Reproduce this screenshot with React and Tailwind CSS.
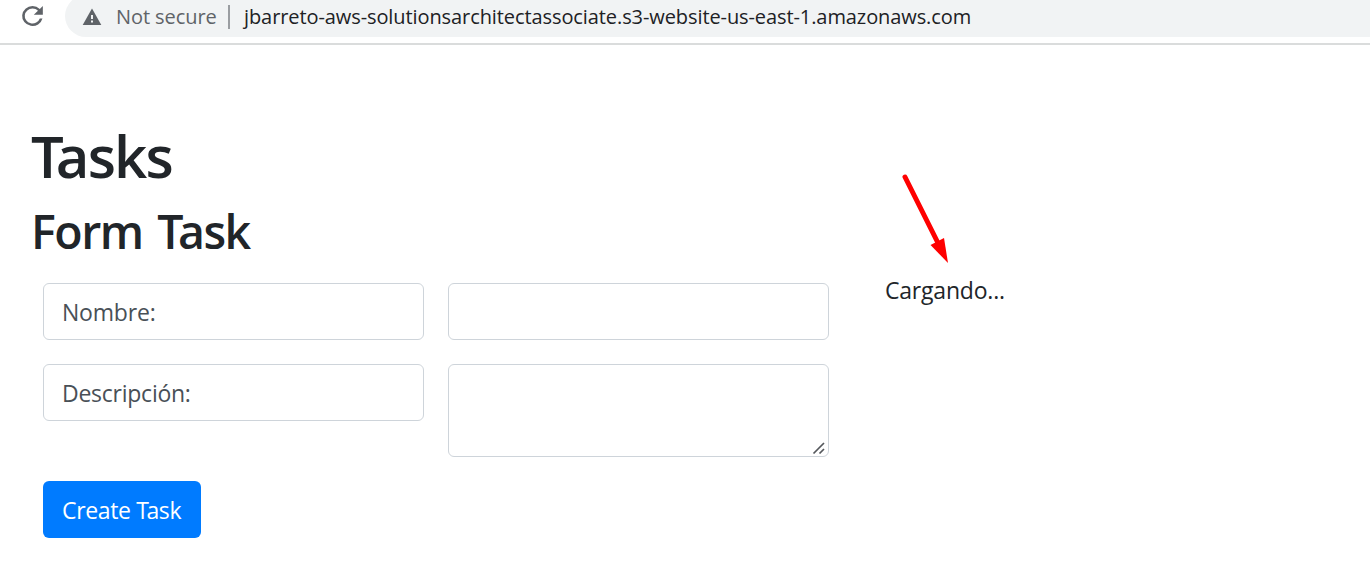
const FONT = "font-['Open_Sans','Noto_Sans',sans-serif]";

function ReloadIcon() {
  return (
    <svg viewBox="0 0 24 24" className="ml-[17px] mt-[1px] h-[30px] w-[31px] shrink-0" preserveAspectRatio="none" aria-hidden="true">
      <path
        fill="#5f6368"
        d="M17.65 6.35A7.96 7.96 0 0 0 12 4a8 8 0 1 0 7.73 10h-2.08A6 6 0 1 1 12 6c1.66 0 3.14.69 4.22 1.78L13 11h7V4z"
      />
    </svg>
  );
}

function WarningIcon() {
  return (
    <svg viewBox="0 0 20 18" className="h-[18px] w-5 shrink-0" aria-hidden="true">
      <path fill="#5f6368" d="M10 0.5 19.3 17H0.7z" />
      <path fill="#f1f3f4" d="M9 7h2v4H9zM9 12.5h2v2H9z" />
    </svg>
  );
}

function AddressBar() {
  return (
    <header className="flex h-[45px] items-start overflow-hidden border-b-2 border-[#dadcdc] bg-white">
      <ReloadIcon />
      <div className="-mt-[5px] ml-[17px] flex h-[42px] flex-1 items-center rounded-l-full bg-[#f1f3f4] pl-[17px] pt-[1px] text-[20px] leading-[30px]">
        <WarningIcon />
        <span className="ml-[14px] w-[101px] whitespace-nowrap tracking-[-0.08px] text-[#5f6368]">Not secure</span>
        <span className="ml-[11px] h-6 w-[2px] bg-[#9a9da1]" />
        <span className="ml-[14px] whitespace-nowrap tracking-[-0.09px] text-[#202124]">
          jbarreto-aws-solutionsarchitectassociate.s3-website-us-east-1.amazonaws.com
        </span>
      </div>
    </header>
  );
}

function Arrow() {
  return (
    <svg viewBox="0 0 50 92" className="absolute left-[14px] -top-[101px] h-[92px] w-[50px]" aria-hidden="true">
      <path d="M6 6 39 72" stroke="#fe0000" strokeWidth="5" strokeLinecap="round" />
      <path d="M49 92 31.500 74 45 67z" fill="#fe0000" />
    </svg>
  );
}

const FIELD = "w-[381px] rounded-[6px] border border-[#ced4da] bg-white";

export default function App() {
  return (
    <div className={`h-[584px] w-[1370px] overflow-hidden bg-white text-[#212529] ${FONT}`}>
      <AddressBar />
      <main className="pl-[31px] pt-[75px]">
        <h1 className="h-[72px] whitespace-nowrap text-[58px] font-semibold leading-[72px] tracking-[-1.8px]">
          <span className="tracking-[-8px]">T</span>asks
        </h1>
        <h2 className="mt-[10px] h-[58px] whitespace-nowrap text-[46.5px] font-semibold leading-[58px] tracking-[-1.5px] [word-spacing:4px]">
          Form <span className="tracking-[-5.5px]">T</span>ask
        </h2>
        <div className="mt-[23px] flex items-start">
          <form className="ml-3 grid grid-cols-[381px_381px] items-start gap-6 text-[23px]" onSubmit={(e) => e.preventDefault()}>
            <label htmlFor="name" className={`${FIELD} h-[57px] pl-[18px] leading-[57px] tracking-[-0.2px] text-[#495057]`}>
              Nombre:
            </label>
            <input id="name" className={`${FIELD} h-[57px] px-[18px]`} />
            <label htmlFor="desc" className={`${FIELD} h-[57px] pl-[18px] leading-[57px] tracking-[-0.25px] text-[#495057]`}>
              Descripción:
            </label>
            <div className="relative h-[93px]">
              <textarea id="desc" className={`${FIELD} h-[93px] resize-none px-[18px]`} />
              <svg viewBox="0 0 14 14" className="absolute bottom-[2px] right-[3px] size-[14px]" aria-hidden="true">
                <path d="M1.500 12.500 12 2M7.500 12.500 12 8" stroke="#55585c" strokeWidth="1.700" />
              </svg>
            </div>
            <button className="h-[57px] w-[158px] whitespace-nowrap rounded-[6px] bg-[#007bff] pl-[19px] pt-[2px] text-left tracking-[-0.35px] text-white">
              Create <span className="tracking-[-2.5px]">T</span>ask
            </button>
          </form>
          <div className="relative ml-[56px] -mt-[11px] whitespace-nowrap text-[23px] leading-[36px] tracking-[-0.2px]">
            <Arrow />
            Cargando...
          </div>
        </div>
      </main>
    </div>
  );
}
